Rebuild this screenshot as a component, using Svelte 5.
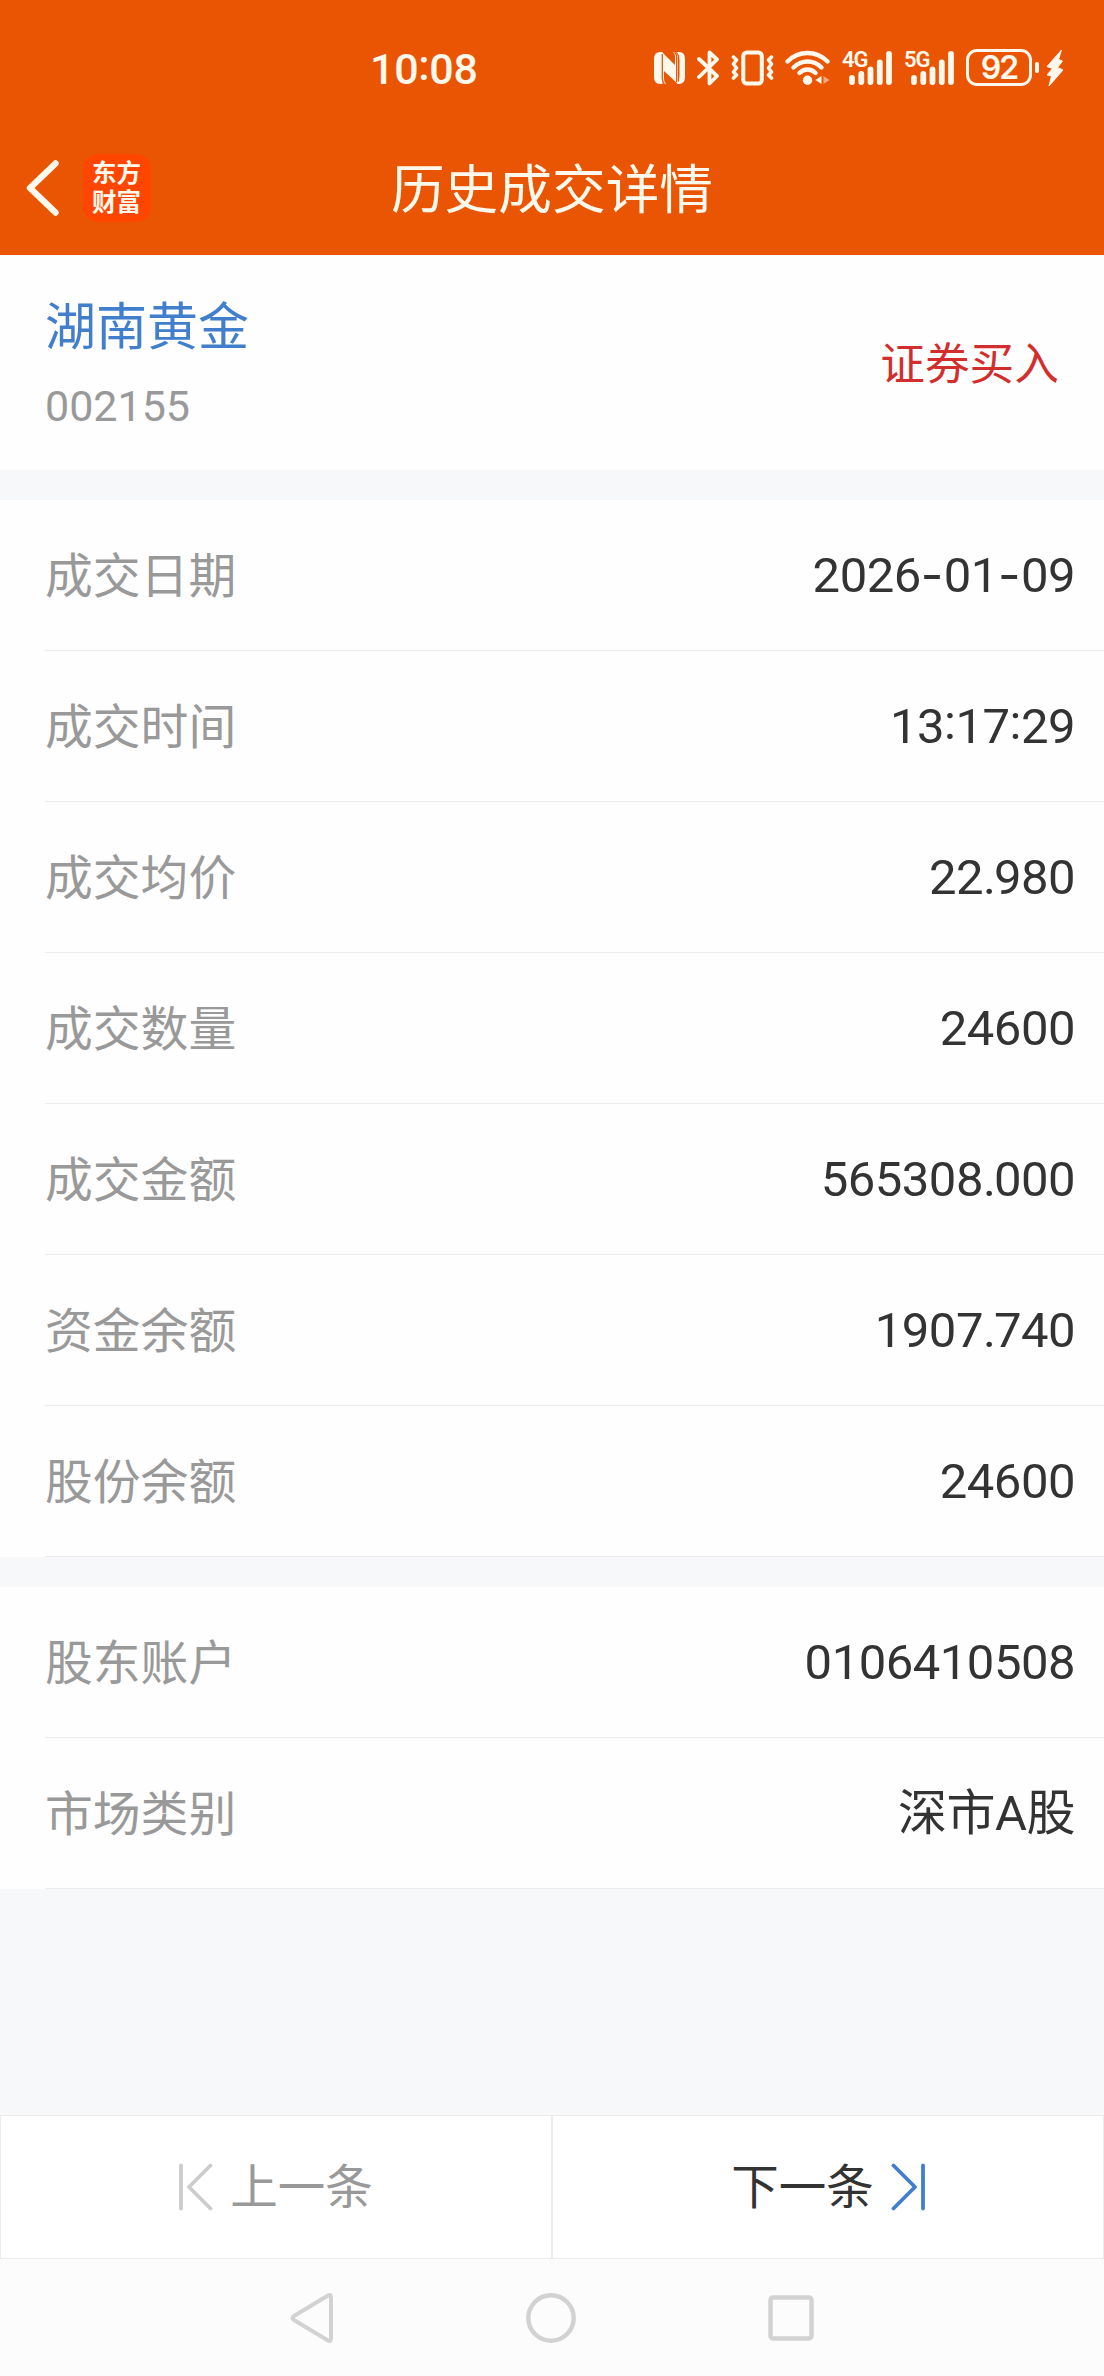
<script>
  const trade = [
    ['成交日期', '2026-01-09'],
    ['成交时间', '13:17:29'],
    ['成交均价', '22.980'],
    ['成交数量', '24600'],
    ['成交金额', '565308.000'],
    ['资金余额', '1907.740'],
    ['股份余额', '24600'],
  ];
  const account = [
    ['股东账户', '0106410508'],
    ['市场类别', '深市A股'],
  ];
  const networks = ['4G', '5G'];

  // Separators get their own spans: dashes are wide, dots tight, colons raised.
  const split = (text) => text.split(/([-:.])/);
</script>

{#snippet figures(text)}
  {#each split(text) as part}{#if part === '-'}<span class="dash">-</span>{:else if part === ':'}<span class="colon">:</span>{:else if part === '.'}<span class="dot">.</span>{:else}{part}{/if}{/each}
{/snippet}

{#snippet rows(items)}
  <dl class="list">
    {#each items as [label, value]}
      <div class="row"><dt>{label}</dt><dd>{@render figures(value)}</dd></div>
    {/each}
  </dl>
{/snippet}

<div class="screen">
  <header>
    <div class="status">
      <span class="clock">{@render figures('10:08')}</span>
      <div class="icons">
        <svg class="nfc" width="31" height="34" viewBox="0 0 31 34">
          <path fill="currentColor" d="M6 1H8V33H6Q0 33 0 26V8Q0 1 6 1ZM23 1H25Q31 1 31 8V26Q31 33 25 33H23Q25.500 30 25.500 25V9Q25.500 4 23 1ZM8 1L21 14V5Q21 2.500 19 1H22Q24 4 24 9V33L10 20V28Q10 31 12 33H9Q6.500 31 6.500 25V5Z" />
          <path d="M8.300 3V27Q8.300 31 10.500 33.500M22.700 31V7Q22.700 3 20.500 .5" fill="none" stroke="#ea5504" stroke-width="1.300" />
        </svg>
        <svg class="bt" width="23" height="36" viewBox="0 0 23 36">
          <path d="M2 9L20 26L12.500 33.500V2.500L20 9.500L2 27" fill="none" stroke="currentColor" stroke-width="3.800" stroke-linecap="round" stroke-linejoin="round" />
        </svg>
        <svg class="vib" width="43" height="36" viewBox="0 0 43 36">
          <g fill="none" stroke="currentColor" stroke-linecap="round" stroke-linejoin="round">
            <rect x="12.300" y="2.500" width="18.500" height="31" rx="3.500" stroke-width="4" />
            <path d="M2.500 7L5.500 10L2.500 14L5.500 18L2.500 22L5.500 25L2.500 28M40.500 7L37.500 10L40.500 14L37.500 18L40.500 22L37.500 25L40.500 28" stroke-width="3.600" />
          </g>
        </svg>
        <svg class="wifi" width="46" height="36" viewBox="0 0 46 36">
          <g fill="none" stroke="currentColor" stroke-width="4.400" stroke-linecap="round">
            <path d="M2.500 11.500Q11 3 22.500 3T42.500 11.500" />
            <path d="M8.500 17.500Q14.500 11.500 22.500 11.500T36.500 17.500" />
            <path d="M14.500 23Q18 19.500 22.500 19.500T30.500 23" />
          </g>
          <circle cx="22.500" cy="30.300" r="4.700" fill="currentColor" />
          <path d="M36.500 26V34L30.500 30Z" fill="currentColor" />
          <path d="M38.500 26V34L44.500 30Z" fill="currentColor" opacity=".5" />
        </svg>
        {#each networks as name}
          <div class="cell">
            <span>{name}</span>
            <svg width="43" height="34" viewBox="0 0 43 34">
              <path d="M3 27V31M12.300 23V31M21.500 18.500V31M30.800 11.500V31M40 3V31" stroke="currentColor" stroke-width="5.800" stroke-linecap="round" />
            </svg>
          </div>
        {/each}
        <div class="battery">92</div>
        <i class="nub"></i>
        <svg class="bolt" width="18" height="38" viewBox="0 0 18 38">
          <path d="M15.500 1L1 17.500L6.500 19.500L1 26L5.500 27L3 37L17 21L11.500 18.500L16.500 12L12.500 10.500Z" fill="currentColor" stroke="currentColor" stroke-linejoin="round" />
        </svg>
      </div>
    </div>
    <div class="bar">
      <div class="left">
        <svg width="34" height="56" viewBox="0 0 34 56">
          <path d="M29.500 3.500L4 28L29.500 52.500" fill="none" stroke="currentColor" stroke-width="6.400" stroke-linecap="round" stroke-linejoin="round" />
        </svg>
        <div class="logo">东方财富</div>
      </div>
      <h1>历史成交详情</h1>
      <div></div>
    </div>
  </header>

  <section class="stock">
    <div>
      <div class="name">湖南黄金</div>
      <div class="code">002155</div>
    </div>
    <div class="side">证券买入</div>
  </section>

  {@render rows(trade)}
  {@render rows(account)}

  <div class="pager">
    <button class="prev">
      <svg width="34" height="48" viewBox="0 0 34 48">
        <path d="M2 2.500V45.500M31.500 2.500L10 24L31.500 45.500" fill="none" stroke="#ccc" stroke-width="3.800" stroke-linecap="round" stroke-linejoin="round" />
      </svg>
      <span>上一条</span>
    </button>
    <button class="next">
      <span>下一条</span>
      <svg width="34" height="48" viewBox="0 0 34 48">
        <path d="M32 2.500V45.500M2.500 2.500L24 24L2.500 45.500" fill="none" stroke="#417fcc" stroke-width="3.800" stroke-linecap="round" stroke-linejoin="round" />
      </svg>
    </button>
  </div>

  <nav>
    <svg width="44" height="52" viewBox="0 0 44 52">
      <path d="M38 3.500Q41 2 41 5.500V46.500Q41 50 38 48.500L4 28Q1 26 4 24Z" fill="none" stroke="#d2d2d2" stroke-width="4" />
    </svg>
    <svg width="50" height="50" viewBox="0 0 50 50">
      <circle cx="25" cy="25" r="22.700" fill="none" stroke="#d2d2d2" stroke-width="4.400" />
    </svg>
    <svg width="46" height="46" viewBox="0 0 46 46">
      <rect x="2.500" y="2.500" width="41" height="41" rx="2.500" fill="none" stroke="#d2d2d2" stroke-width="4.400" />
    </svg>
  </nav>
</div>

<style>
  :global(body) {
    margin: 0;
  }
  .screen {
    width: 1104px;
    height: 2376px;
    display: flex;
    flex-direction: column;
    background: #f7f8fa;
    font-family: Roboto, 'Noto Sans CJK SC', sans-serif;
    color: #333;
    overflow: hidden;
  }
  svg {
    display: block;
    flex: none;
  }
  header {
    height: 255px;
    background: #ea5504;
    color: #fff8ec;
    flex: none;
  }
  .status {
    height: 135px;
    display: flex;
    align-items: center;
    justify-content: space-between;
    padding: 0 40px 0 370px;
    box-sizing: border-box;
  }
  .clock {
    font-size: 43px;
    font-weight: 500;
    line-height: 50px;
    padding-top: 3px;
    letter-spacing: -0.300px;
  }
  .dash {
    font-family: Inter, sans-serif;
    letter-spacing: 0.500px;
  }
  .colon {
    vertical-align: 4px;
    line-height: 1;
  }
  .dot {
    letter-spacing: -2px;
  }
  .icons {
    display: flex;
    align-items: center;
  }
  .bt {
    margin-left: 12px;
  }
  .vib {
    margin-left: 11px;
  }
  .wifi {
    margin-left: 11px;
  }
  .cell {
    position: relative;
    width: 50px;
    margin-left: 11px;
    display: flex;
    justify-content: flex-end;
  }
  .cell + .cell {
    margin-left: 12px;
  }
  .cell span {
    position: absolute;
    left: 0;
    top: -1px;
    font: 600 22px/20px Roboto, sans-serif;
    letter-spacing: -1px;
  }
  .battery {
    width: 66px;
    height: 37px;
    margin-left: 12px;
    box-sizing: border-box;
    border: 3px solid;
    border-radius: 11px;
    font-family: Inter, sans-serif;
    font-size: 32px;
    font-weight: 600;
    line-height: 31px;
    letter-spacing: -2px;
    text-align: center;
  }
  .nub {
    width: 4px;
    height: 11px;
    margin-left: 3px;
    border-radius: 2px;
    background: currentColor;
  }
  .bolt {
    margin-left: 7px;
  }
  .bar {
    height: 106px;
    display: grid;
    grid-template-columns: 1fr auto 1fr;
    align-items: center;
  }
  .left {
    display: flex;
    align-items: center;
    padding-left: 26px;
    gap: 23px;
  }
  .logo {
    width: 68px;
    height: 68px;
    padding: 3px 9px 0;
    box-sizing: border-box;
    border-radius: 15px;
    background: #ff4600;
    font: 700 24.500px/29px 'Noto Sans CJK SC', sans-serif;
    word-break: break-all;
  }
  h1 {
    margin: 0;
    padding-bottom: 4px;
    font: 400 53.700px/80px 'Noto Sans CJK SC', sans-serif;
  }
  .stock {
    height: 215px;
    flex: none;
    box-sizing: border-box;
    padding: 0 45px;
    display: flex;
    align-items: center;
    justify-content: space-between;
    background: #fefefe;
  }
  .name {
    font: 400 51px/76px 'Noto Sans CJK SC', sans-serif;
    color: #417fcc;
  }
  .code {
    margin: 7px 0 -3px;
    font-size: 43px;
    line-height: 76px;
    color: #999;
  }
  .side {
    font: 400 44.700px/66px 'Noto Sans CJK SC', sans-serif;
    padding-bottom: 4px;
    color: #d32e2e;
  }
  .list {
    margin: 30px 0 0;
    flex: none;
  }
  .row {
    height: 151px;
    box-sizing: border-box;
    padding: 0 29px 0 45px;
    display: flex;
    align-items: center;
    justify-content: space-between;
    background: linear-gradient(#ececee, #ececee) 45px 100% / 100% 1px no-repeat #fefefe;
  }
  dt {
    font: 400 47.800px/72px 'Noto Sans CJK SC', sans-serif;
    padding-bottom: 6px;
    color: #999;
  }
  dd {
    margin: 0;
    font-size: 49px;
    line-height: 72px;
    letter-spacing: -0.500px;
  }
  .pager {
    margin-top: auto;
    height: 144px;
    flex: none;
    box-sizing: border-box;
    display: grid;
    grid-template-columns: 552px 1fr;
    border: 1px solid #ececec;
    background: #fff;
  }
  button {
    display: flex;
    align-items: center;
    justify-content: center;
    border: 0;
    padding: 0;
    background: none;
    font: 400 47.500px/70px 'Noto Sans CJK SC', sans-serif;
    color: #333;
    gap: 17px;
  }
  button span {
    padding-bottom: 6px;
  }
  .prev {
    border-right: 2px solid #ececec;
    color: #999;
  }
  nav {
    height: 117px;
    flex: none;
    display: flex;
    align-items: center;
    justify-content: center;
    gap: 192px;
    background: #fcfcfc;
  }
</style>
